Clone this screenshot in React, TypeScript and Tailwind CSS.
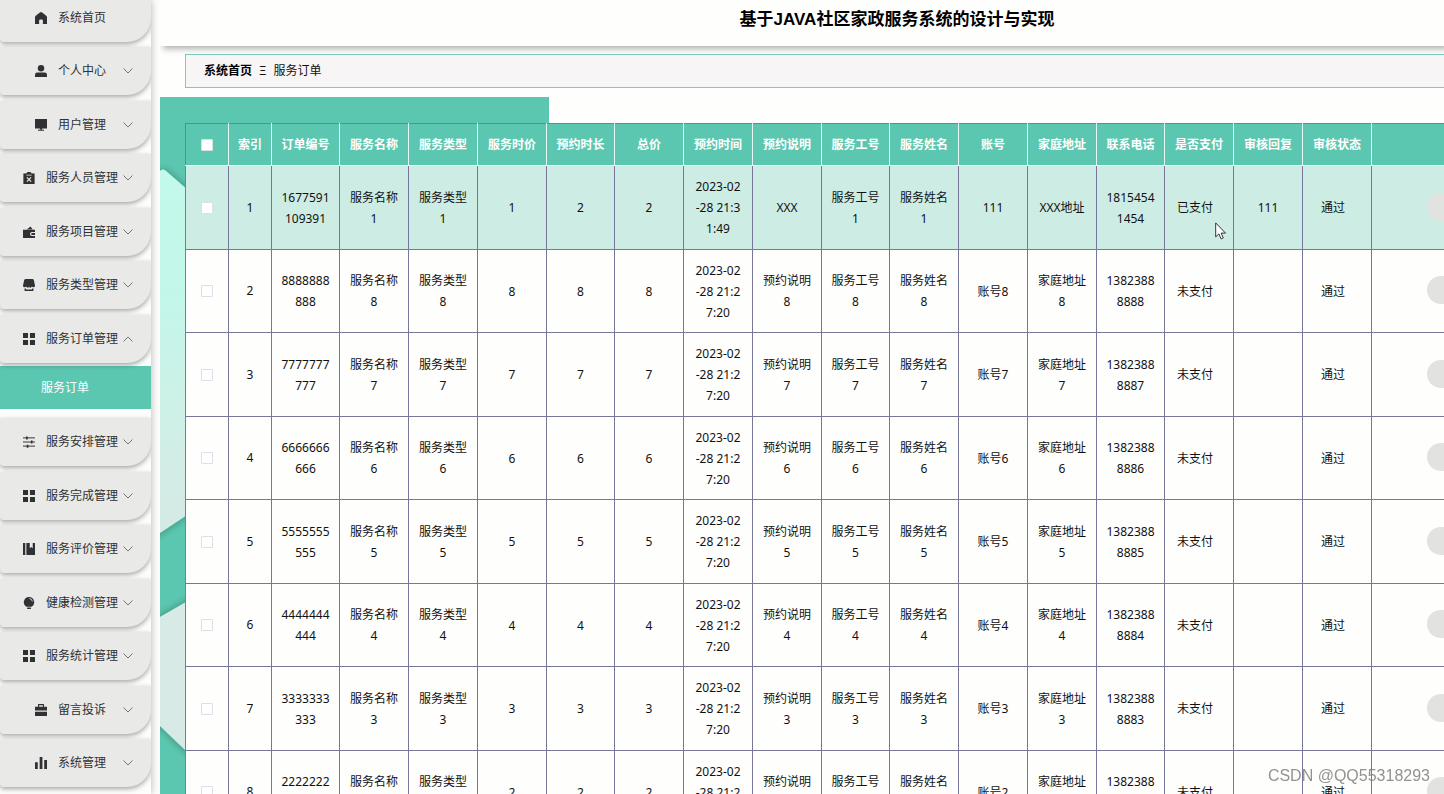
import type { ReactNode } from "react";
import clsx from "clsx";

const icons: Record<string, ReactNode> = {
  home: <path d="M8 0q.8 0 1.500.5L15 5q1 .8 1 2v9h-5.500v-4.500q0-1.500-1.500-1.500H7q-1.500 0-1.500 1.500V16H0V7q0-1.200 1-2L6.500.5Q7.200 0 8 0z" />,
  user: (
    <>
      <circle cx="8" cy="4.300" r="4.300" />
      <path d="M0 16v-3q0-3 3-3h10q3 0 3 3v3z" />
    </>
  ),
  platform: <path d="M0 0h16v12.500H0zM6.500 12.500h3V14h-3zM4 14.200h8v1.600H4z" />,
  release: (
    <>
      <path d="M.5 2h4v2.500h7V2h4v14H.5z" />
      <path d="M5.500 0h5v1.500h2v2h-9v-2h2z" />
      <path d="m5.200 7.200 5.600 5.600M10.800 7.200l-5.600 5.600" stroke="#e9e9e8" strokeWidth="1.700" fill="none" />
    </>
  ),
  wallet: (
    <>
      <path d="M0 5h16v3h-4a2.700 2.700 0 0 0 0 5.400h4V16H0z" />
      <path d="M12.200 9.400H16v2.600h-3.800a1.300 1.300 0 0 1 0-2.600z" />
      <path d="m5 4.500 5-3.700 3 3.700z" />
    </>
  ),
  shop: (
    <>
      <path d="M3.500 0h9q1.500 0 2 1.500L16 8.500q0 2.500-2 2.500t-2-1q-1 1.500-2.200 1.500T8 10.200q-.6 1.300-1.800 1.300T4 10q0 1-2 1T0 8.500l1.500-7Q2 0 3.500 0z" />
      <path d="M3 12.500V15h10v-2.500" fill="none" stroke="currentColor" strokeWidth="1.800" />
    </>
  ),
  grid: <path d="M0 0h6.700v6.700H0zM9.300 0H16v6.700H9.300zM0 9.300h6.700V16H0zM9.300 9.300H16V16H9.300z" />,
  operation: (
    <>
      <path d="M0 2.500h16M0 8h16M0 13.500h16" stroke="currentColor" strokeWidth="1.300" />
      <path d="M4 .5h2.200v4H4zM10.500 6h2.200v4h-2.200zM5 11.500h2.200v4H5z" />
    </>
  ),
  book: <path d="M0 0h3v16H0zM4.500 0H9v7l2-1.600L13 7V0h3v16H4.500z" />,
  bulb: (
    <>
      <path d="M8 0a7 7 0 0 1 3.500 13h-7A7 7 0 0 1 8 0z" />
      <path d="M5.500 14h5v2h-5z" />
      <path d="M8.500 2q3.500.4 4 4" fill="none" stroke="#e9e9e8" strokeWidth="1.200" />
    </>
  ),
  briefcase: (
    <>
      <path d="M4.800 4V.8h6.400V4" fill="none" stroke="currentColor" strokeWidth="1.500" />
      <path d="M0 3.800h16v5H0zM0 10.200h16V16H0z" />
    </>
  ),
  chart: <path d="M0 7h3.700v9H0zM6.200 0h3.700v16H6.200zM12.300 4H16v12h-3.700z" />,
};

type Item = { icon: string; label: string; plain?: boolean; open?: boolean; child?: string };

const menu: Item[] = [
  { icon: "home", label: "系统首页", plain: true },
  { icon: "user", label: "个人中心" },
  { icon: "platform", label: "用户管理" },
  { icon: "release", label: "服务人员管理" },
  { icon: "wallet", label: "服务项目管理" },
  { icon: "shop", label: "服务类型管理" },
  { icon: "grid", label: "服务订单管理", open: true, child: "服务订单" },
  { icon: "operation", label: "服务安排管理" },
  { icon: "grid", label: "服务完成管理" },
  { icon: "book", label: "服务评价管理" },
  { icon: "bulb", label: "健康检测管理" },
  { icon: "grid", label: "服务统计管理" },
  { icon: "briefcase", label: "留言投诉" },
  { icon: "chart", label: "系统管理" },
];

const headers = [
  "订单编号", "服务名称", "服务类型", "服务时价", "预约时长", "总价", "预约时间", "预约说明",
  "服务工号", "服务姓名", "账号", "家庭地址", "联系电话", "是否支付", "审核回复", "审核状态",
];

const firstRow = [
  "1677591\n109391", "服务名称\n1", "服务类型\n1", "1", "2", "2", "2023-02\n-28 21:3\n1:49", "XXX",
  "服务工号\n1", "服务姓名\n1", "111", "XXX地址", "1815454\n1454", "已支付", "111", "通过",
];

function orderRow(n: number) {
  const d = String(n);
  return [
    `${d.repeat(7)}\n${d.repeat(3)}`, `服务名称\n${d}`, `服务类型\n${d}`, d, d, d,
    "2023-02\n-28 21:2\n7:20", `预约说明\n${d}`, `服务工号\n${d}`, `服务姓名\n${d}`,
    `账号${d}`, `家庭地址\n${d}`, `1382388\n888${d}`, "未支付", "", "通过",
  ];
}

const rows = [firstRow, ...[8, 7, 6, 5, 4, 3, 2].map(orderRow)];

function MenuItem({ item }: { item: Item }) {
  return (
    <li className="odd:mb-[5px] even:mb-[6px]">
      <button
        type="button"
        className="relative flex h-12 w-full items-center justify-center gap-[11px] rounded-bl-[4px] rounded-br-[24px] bg-[#e9e9e8] pr-[10px] text-[#303133] shadow-[0_2px_5px_rgba(0,0,0,0.35)]"
      >
        <svg viewBox="0 0 16 16" className="size-3" fill="currentColor" aria-hidden="true">
          {icons[item.icon]}
        </svg>
        <span>{item.label}</span>
        {!item.plain && (
          <svg
            viewBox="0 0 10 6"
            className={clsx("absolute right-[18px] h-[6px] w-[10px]", item.open && "rotate-180")}
            fill="none"
            stroke="#777"
            aria-hidden="true"
          >
            <path d="m.5.5 4.500 4.500L9.500.5" />
          </svg>
        )}
      </button>
      {item.child && (
        <a
          href="#orders"
          className="mt-[3px] mb-[9px] flex h-[43px] items-center justify-center bg-[#5cc7b0] pr-[21px] text-white"
        >
          {item.child}
        </a>
      )}
    </li>
  );
}

function Check({ label }: { label: string }) {
  return (
    <input
      type="checkbox"
      aria-label={label}
      className="mx-auto block size-3 appearance-none rounded-[1px] border border-[#dcdfe6] bg-white"
    />
  );
}

function Backdrop() {
  return (
    <svg
      className="absolute top-0 left-0 h-[900px] w-[389px]"
      viewBox="0 0 389 900"
      preserveAspectRatio="xMinYMin slice"
      aria-hidden="true"
    >
      <defs>
        <linearGradient id="pale" x1="0" y1="0" x2="0" y2="1">
          <stop offset="0" stopColor="#c2f9eb" />
          <stop offset="0.3" stopColor="#c2f7ea" />
          <stop offset="0.75" stopColor="#d1eee6" />
          <stop offset="1" stopColor="#d6e9e4" />
        </linearGradient>
        <filter id="soft" x="-20%" y="-20%" width="140%" height="140%">
          <feDropShadow dx="0" dy="0" stdDeviation="4" floodColor="#000" floodOpacity="0.35" />
        </filter>
      </defs>
      <path d="M0 0h389v900H0z" fill="#5cc7b0" />
      <path d="M-20 90 0 74q3-3 6 0l60 52v266L0 436l-20 13z" fill="url(#pale)" filter="url(#soft)" />
      <path d="M-20 532 0 520l66-38v210L0 629l-20-20z" fill="#d8eae5" filter="url(#soft)" />
    </svg>
  );
}

function Pointer() {
  return (
    <svg viewBox="0 0 12 18" className="absolute top-14 left-[50px] h-[18px] w-3" aria-hidden="true">
      <path
        d="M.7.9v14l3.200-3 2.200 5 2.200-1-2.200-4.800h4.400z"
        fill="#fff"
        stroke="#333"
        strokeWidth="1"
      />
    </svg>
  );
}

function OrderTable() {
  return (
    <table className="relative w-[118%] table-fixed border-collapse border border-[#6f7f9d] bg-[#fefefd] text-center">
      <colgroup>
        <col className="w-[43px]" />
        <col className="w-[43px]" />
        {headers.map((h, i) => (
          <col key={h} className={i % 4 === 0 ? "w-[68px]" : "w-[69px]"} />
        ))}
        <col />
      </colgroup>
      <thead className="bg-[#5cc7b0] text-white">
        <tr className="h-[42px] *:border-r *:border-b *:border-[#e6f8f3]">
          <th scope="col">
            <Check label="全选" />
          </th>
          <th scope="col">索引</th>
          {headers.map((h) => (
            <th key={h} scope="col">
              {h}
            </th>
          ))}
          <td />
        </tr>
      </thead>
      <tbody>
        {rows.map((row, r) => (
          <tr
            key={r}
            className="first:bg-[#cdede4] odd:h-[84px] even:h-[83px] *:border-r *:border-b *:border-[#77779a]"
          >
            <td>
              <Check label={`选择 ${r + 1}`} />
            </td>
            <td>{r + 1}</td>
            {row.map((value, c) => (
              <td
                key={c}
                className={clsx("relative leading-[21px] whitespace-pre-line", (c === 13 || c === 15) && "pr-2")}
              >
                {value}
                {r === 0 && c === 13 && <Pointer />}
              </td>
            ))}
            <td className="pb-[2px] pl-[55px] text-left">
              <button type="button" aria-label="详情" className="block h-7 w-20 rounded-full bg-[#e2e2e1]" />
            </td>
          </tr>
        ))}
      </tbody>
    </table>
  );
}

export default function App() {
  return (
    <div className="flex h-screen gap-[9px] overflow-hidden bg-[#fefefd] font-['Noto_Sans','Noto_Sans_CJK_SC',sans-serif] text-[12px] leading-[18px] text-[#111]">
      <aside className="w-[151px] shrink-0 shadow-[0_0_8px_rgba(0,0,0,0.3)]">
        <nav className="h-full overflow-hidden bg-[#fdfdfc]">
          <ul className="-mt-1.5">
            {menu.map((item) => (
              <MenuItem key={item.label} item={item} />
            ))}
          </ul>
        </nav>
      </aside>

      <main className="relative min-w-0 flex-1 overflow-hidden bg-[#fefefd]">
        <header className="flex h-[46px] justify-center bg-[#fefefd] pt-2 pl-[190px] shadow-[3px_3px_6px_rgba(0,0,0,0.3)]">
          <h1 className="font-['Liberation_Sans','Noto_Sans_CJK_SC',sans-serif] text-[17px] leading-6 font-bold text-black">
            基于JAVA社区家政服务系统的设计与实现
          </h1>
        </header>

        <div className="relative mt-2 ml-[25px] flex h-[34px] items-center gap-[7px] border border-r-0 border-[#7fcbbb] bg-[#f7f5f5] pl-[18px]">
          <a href="#home" className="font-bold text-black">
            系统首页
          </a>
          <span>Ξ</span>
          <span>服务订单</span>
        </div>

        <section className="relative mt-[9px] pt-[26px] pl-[25px]">
          <Backdrop />
          <OrderTable />
        </section>
      </main>

      <p className="fixed right-[14px] bottom-[6px] font-['Liberation_Sans',sans-serif] text-[16px] leading-6 text-[#777]/80">
        CSDN @QQ55318293
      </p>
    </div>
  );
}
